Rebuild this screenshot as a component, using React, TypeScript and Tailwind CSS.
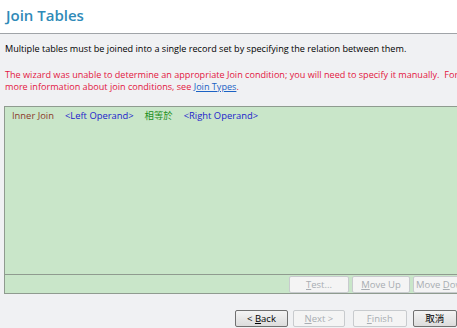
import React from "react";

const font = { fontFamily: '"Open Sans", "Noto Sans CJK TC", sans-serif' };

function Btn({ label, disabled, className = "" }: { label: React.ReactNode; disabled?: boolean; className?: string }) {
  return (
    <div
      className={
        "flex h-[17px] items-center justify-center overflow-hidden whitespace-nowrap rounded-[2px] border text-[9.5px] leading-none " +
        (disabled
          ? "border-[#c8cbce] bg-[#f4f4f4] text-[#a8adb2] "
          : "border-[#707070] bg-gradient-to-b from-[#f4f4f4] to-[#dcdcdc] text-black ") +
        className
      }
    >
      {label}
    </div>
  );
}

export default function App() {
  return (
    <div className="flex h-[328px] w-[457px] flex-col overflow-hidden bg-[#f0f1f3]" style={font}>
      <div className="h-[34px] shrink-0 border-b border-[#a0a4a8] bg-white pl-[6px] pt-[4px]">
        <div className="text-[15px] font-semibold leading-[22px] text-[#2f8ab8]">Join Tables</div>
      </div>
      <div className="pl-[5px] pt-[8px] text-[9.1px] leading-[14px] text-black whitespace-nowrap">
        Multiple tables must be joined into a single record set by specifying the relation between them.
      </div>
      <div className="pl-[5px] pt-[13px] text-[9.1px] leading-[12px] text-[#e3163f] whitespace-nowrap">
        <div>The wizard was unable to determine an appropriate Join condition; you will need to specify it manually.&nbsp; For</div>
        <div>
          more information about join conditions, see <span className="text-[#1b62c4] underline">Join Types</span>.
        </div>
      </div>
      <div className="ml-[4px] mt-[13px] flex h-[188px] w-[460px] shrink-0 flex-col border border-[#8f9b8f] bg-[#c9e6c9]">
        <div className="flex gap-[11px] pl-[7px] pt-[3px] text-[9.4px] leading-[12px] whitespace-nowrap">
          <span className="text-[#8b3a2a]">Inner Join</span>
          <span className="text-[#1c1ccc]">&lt;Left Operand&gt;</span>
          <span className="text-[#1a8f1a]">相等於</span>
          <span className="text-[#1c1ccc]">&lt;Right Operand&gt;</span>
        </div>
        <div className="flex-1" />
        <div className="flex h-[19px] gap-[3px] border-t border-[#8f9b8f] pl-[284px] pt-[1px]">
          <Btn label={<span><u>T</u>est...</span>} disabled className="w-[60px] shrink-0" />
          <Btn label={<span><u>M</u>ove Up</span>} disabled className="w-[58px] shrink-0" />
          <Btn label={<span>Move <u>D</u>own</span>} disabled className="w-[58px] shrink-0 justify-start pl-[2px]" />
        </div>
      </div>
      <div className="flex gap-[5px] pl-[235px] pt-[16px]">
        <Btn label={<span>&lt; <u>B</u>ack</span>} className="w-[55px]" />
        <Btn label={<span><u>N</u>ext &gt;</span>} disabled className="w-[54px]" />
        <Btn label={<span><u>F</u>inish</span>} disabled className="ml-[3px] w-[56px]" />
        <Btn label="取消" className="ml-[1px] w-[46px]" />
      </div>
    </div>
  );
}
